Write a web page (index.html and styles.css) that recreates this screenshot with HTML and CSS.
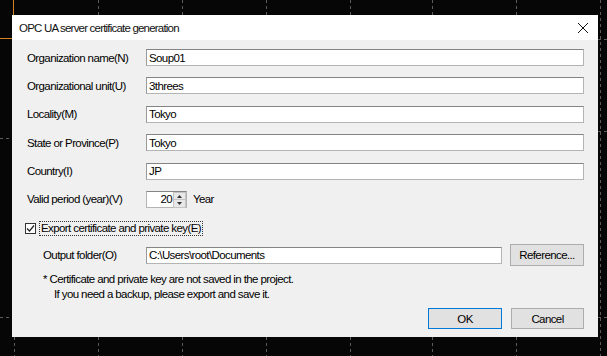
FILE: index.html
```html
<!DOCTYPE html>
<html lang="en">
    <head>
        <meta charset="utf-8">
        <title>OPC UA server certificate generation</title>
        <link rel="stylesheet" href="styles.css">
    </head>
    <body>
        <!-- guide lines of the canvas behind the dialog -->
        <svg class="guides" width="607" height="356">
            <g stroke="#5c5c5c" stroke-dasharray="3 3">
                <line x1="14.5" y1="337" x2="14.5" y2="356"/>
                <line x1="98.5" y1="0" x2="98.5" y2="15"/>
                <line x1="98.5" y1="337" x2="98.5" y2="356"/>
                <line x1="182.5" y1="0" x2="182.5" y2="15"/>
                <line x1="182.5" y1="337" x2="182.5" y2="356"/>
                <line x1="266.5" y1="0" x2="266.5" y2="15"/>
                <line x1="266.5" y1="337" x2="266.5" y2="356"/>
                <line x1="350.5" y1="0" x2="350.5" y2="15"/>
                <line x1="350.5" y1="337" x2="350.5" y2="356"/>
                <line x1="432.5" y1="0" x2="432.5" y2="15"/>
                <line x1="432.5" y1="337" x2="432.5" y2="356"/>
                <line x1="516.5" y1="0" x2="516.5" y2="15"/>
                <line x1="516.5" y1="337" x2="516.5" y2="356"/>
                <line x1="600.5" y1="0" x2="600.5" y2="356"/>
                <line x1="0" y1="138.5" x2="12" y2="138.5"/>
                <line x1="0" y1="317.5" x2="12" y2="317.5"/>
                <line x1="598" y1="39.5" x2="607" y2="39.5"/>
                <line x1="598" y1="131.5" x2="607" y2="131.5"/>
                <line x1="598" y1="317.5" x2="607" y2="317.5"/>
            </g>
            <line x1="13.5" y1="0" x2="13.5" y2="15" stroke="#d9801e"/>
            <line x1="0" y1="38.5" x2="12" y2="38.5" stroke="#d9801e"/>
        </svg>

        <div class="dialog">
            <div class="titlebar">
                <span class="title">OPC UA server certificate generation</span>
                <svg class="close" width="10" height="10" viewBox="0 0 10 10">
                    <path d="M0 0 L10 10 M10 0 L0 10" stroke="#111" stroke-width="1"/>
                </svg>
            </div>

            <div class="content">
                <div class="fields">
                    <label>Organization name(N)</label>
                    <input type="text" value="Soup01">
                    <label>Organizational unit(U)</label>
                    <input type="text" value="3threes">
                    <label>Locality(M)</label>
                    <input type="text" value="Tokyo">
                    <label>State or Province(P)</label>
                    <input type="text" value="Tokyo">
                    <label>Country(I)</label>
                    <input type="text" value="JP">
                    <label>Valid period (year)(V)</label>
                    <div class="period">
                        <div class="spin">
                            <span class="spin-value">20</span>
                            <div class="spin-btns">
                                <span class="spin-btn">
                                    <svg width="5" height="3" viewBox="0 0 5 3"><path d="M2.5 0 L5 3 L0 3 Z" fill="#333"/></svg>
                                </span>
                                <span class="spin-btn">
                                    <svg width="5" height="3" viewBox="0 0 5 3"><path d="M0 0 L5 0 L2.5 3 Z" fill="#333"/></svg>
                                </span>
                            </div>
                        </div>
                        <span>Year</span>
                    </div>
                </div>

                <div class="export">
                    <span class="check">
                        <svg width="9" height="9" viewBox="0 0 9 9"><path d="M1 4.5 L3.5 7 L8 1.5" fill="none" stroke="#222" stroke-width="1.2"/></svg>
                    </span>
                    <span class="focus">Export certificate and private key(E)</span>
                </div>

                <div class="folder">
                    <label>Output folder(O)</label>
                    <input type="text" value="C:\Users\root\Documents">
                    <button type="button">Reference...</button>
                </div>

                <p class="note">
                    * Certificate and private key are not saved in the project.<br>
                    <span class="note-indent">If you need a backup, please export and save it.</span>
                </p>

                <div class="actions">
                    <button type="button" class="default">OK</button>
                    <button type="button" class="cancel">Cancel</button>
                </div>
            </div>
        </div>
    </body>
</html>
```

FILE: styles.css
```css
body {
    margin: 0;
    width: 607px;
    height: 356px;
    padding: 15px 0 0 12px;
    box-sizing: border-box;
    overflow: hidden;
    position: relative;
    background: #060606;
    font-family: "Liberation Sans", Arial, sans-serif;
    font-size: 11.5px;
    letter-spacing: -0.6px;
    color: #000;
}
.guides {
    position: absolute;
    left: 0;
    top: 0;
}
.dialog {
    position: relative;
    width: 586px;
    height: 322px;
    background: #f0f0f0;
    display: flex;
    flex-direction: column;
}
.titlebar {
    height: 25px;
    background: #fff;
    display: flex;
    align-items: center;
    justify-content: space-between;
    padding: 0 10px 0 7px;
}
.title {
    font-size: 11.5px;
    letter-spacing: -0.8px;
    color: #111;
}
.content {
    flex: 1;
    display: flex;
    flex-direction: column;
    padding: 9px 14px 8px 15px;
}
.fields {
    display: grid;
    grid-template-columns: 119px 1fr;
    row-gap: 11.4px;
    align-items: center;
}
input {
    height: 17px;
    box-sizing: border-box;
    margin: 0;
    padding: 0 2px;
    border: 1px solid #b4b4b4;
    border-top-color: #848484;
    border-left-color: #9a9a9a;
    background: #fff;
    font: inherit;
    letter-spacing: inherit;
    color: #000;
}
.period {
    display: flex;
    align-items: center;
    gap: 6px;
}
.spin {
    display: flex;
    width: 41px;
    height: 17px;
    box-sizing: border-box;
    border: 1px solid #b4b4b4;
    border-top-color: #848484;
    background: #fff;
}
.spin-value {
    flex: 1;
    text-align: right;
    padding-right: 1px;
    line-height: 15px;
}
.spin-btns {
    width: 13px;
    display: flex;
    flex-direction: column;
}
.spin-btn {
    flex: 1;
    display: flex;
    align-items: center;
    justify-content: center;
    background: #e8e8e8;
    border: 1px solid #c4c4c4;
    margin: 0 0 -1px 0;
}
.export {
    display: flex;
    align-items: center;
    gap: 3px;
    margin: 13.5px 0 0 -2px;
}
.check {
    width: 11px;
    height: 11px;
    box-sizing: border-box;
    border: 1px solid #333;
    background: #fff;
    display: flex;
    align-items: center;
    justify-content: center;
}
.focus {
    border: 1px dotted #333;
    padding: 0 1px;
    line-height: 13px;
}
.folder {
    display: grid;
    grid-template-columns: 95px 1fr 74px;
    column-gap: 8px;
    align-items: center;
    margin-top: 8px;
    padding-left: 16px;
}
button {
    height: 22px;
    margin: 0;
    padding: 0;
    background: #e1e1e1;
    border: 1px solid #adadad;
    font: inherit;
    letter-spacing: inherit;
    color: #000;
}
.note {
    margin: 6px 0 0 16px;
    line-height: 15px;
}
.note-indent {
    padding-left: 11px;
}
.actions {
    margin-top: auto;
    display: flex;
    justify-content: flex-end;
    gap: 9px;
}
.actions button {
    height: 21px;
    width: 73px;
}
.actions .default {
    width: 74px;
    border-color: #0078d7;
}
```
